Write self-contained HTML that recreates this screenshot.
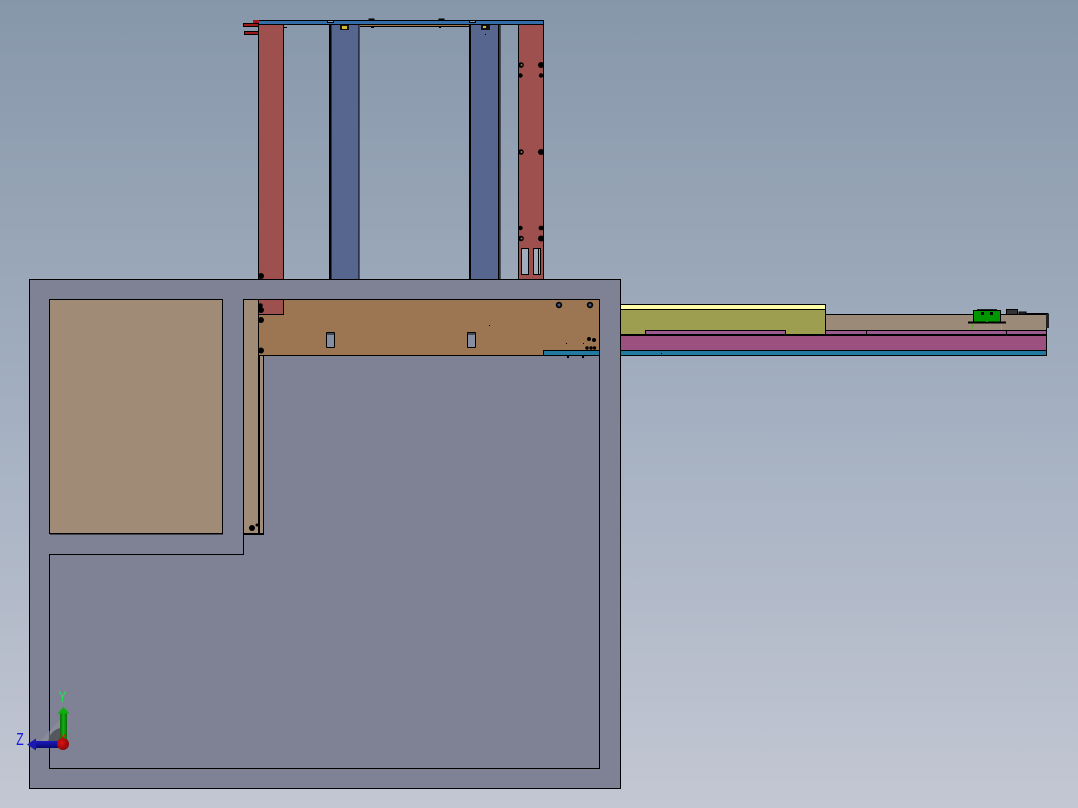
<!DOCTYPE html>
<html>
<head>
<meta charset="utf-8">
<style>
html,body{margin:0;padding:0;width:1078px;height:808px;overflow:hidden;background:#a0adbd}
svg{display:block;position:absolute;left:0;top:0}
</style>
</head>
<body>
<svg width="1078" height="808" viewBox="0 0 1078 808" xmlns="http://www.w3.org/2000/svg">
<defs>
<linearGradient id="bg" x1="0" y1="0" x2="0" y2="1">
<stop offset="0" stop-color="#8797aa"/>
<stop offset="0.5" stop-color="#a3afc0"/>
<stop offset="1" stop-color="#c3c7d3"/>
</linearGradient>
<radialGradient id="ball" cx="0.4" cy="0.4" r="0.7">
<stop offset="0" stop-color="#e01010"/>
<stop offset="1" stop-color="#7a0808"/>
</radialGradient>
<linearGradient id="gshaft" x1="0" y1="0" x2="1" y2="0">
<stop offset="0" stop-color="#0a6a0a"/><stop offset="0.5" stop-color="#12b012"/><stop offset="1" stop-color="#0a6a0a"/>
</linearGradient>
<linearGradient id="bshaft" x1="0" y1="0" x2="0" y2="1">
<stop offset="0" stop-color="#1a1ac0"/><stop offset="1" stop-color="#080870"/>
</linearGradient>
</defs>
<rect width="1078" height="808" fill="url(#bg)"/>

<g shape-rendering="crispEdges" stroke="#000" stroke-width="1">
<!-- columns -->
<rect x="258.5" y="24.5" width="25" height="255" fill="#9e504e"/>
<rect x="330" y="24.5" width="29" height="255" fill="#56668f"/>
<rect x="470.5" y="24.5" width="29.500" height="255" fill="#56668f"/>
<rect x="518.5" y="24.5" width="25" height="255" fill="#9e504e"/>
<path d="M329.5 25V279M331 25V279M469.5 25V279M498.5 25V279" fill="none"/>
<path d="M360 25.5H469" stroke="#9c7552" fill="none"/>
<path d="M360 26.5H469" stroke="#000" fill="none"/>
<!-- slots -->
<rect x="521.5" y="248.5" width="7" height="26" fill="#a0adbd"/>
<rect x="533.5" y="248.5" width="7" height="26" fill="#a0adbd"/>
<path d="M538.5 249V274" fill="none"/>
<!-- top bar -->
<rect x="258.5" y="20.5" width="285" height="4" fill="#336ea8"/>
<rect x="327.5" y="20.5" width="6" height="2" fill="#8e9ab0"/>
<rect x="469.5" y="20.5" width="6" height="2" fill="#8e9ab0"/>
<rect x="369" y="19" width="5" height="1" fill="#000"/>
<rect x="439" y="19" width="5" height="1" fill="#000"/>
<rect x="340" y="25" width="9" height="5" fill="#111" stroke="none"/>
<rect x="342" y="26" width="5" height="3" fill="#d0b830" stroke="none"/>
<rect x="481" y="25" width="9" height="5" fill="#111" stroke="none"/>
<rect x="483" y="26" width="3" height="2" fill="#d0b830" stroke="none"/>
<!-- red pins -->
<rect x="253" y="20" width="6" height="4" fill="#a01818" stroke="none"/>
<rect x="243.5" y="23.5" width="15" height="3" fill="#a01818"/>
<rect x="244.5" y="31.5" width="14" height="3" fill="#a01818"/>

<!-- big panel -->
<rect x="29.5" y="279.5" width="591" height="509" fill="#7f8294"/>
<path d="M49.5 554.5H243.5V299.5H599.5V768.5H49.5Z" fill="#7f8294"/>
<rect x="49.5" y="299.5" width="173" height="234" fill="#a08b77"/>
<path d="M50 534H223" stroke="#000" fill="none"/>
<!-- strip -->
<rect x="243.5" y="299.5" width="20" height="235" fill="#a08b77"/>
<rect x="258" y="300" width="2" height="234" fill="#000" stroke="none"/>
<rect x="244" y="533" width="20" height="2" fill="#000" stroke="none"/>
<!-- brown -->
<rect x="258.5" y="299.5" width="341" height="56" fill="#9c7552"/>
<rect x="258.5" y="299.5" width="25" height="15" fill="#9e504e"/>
<rect x="326.5" y="332.5" width="8" height="15" rx="1" fill="#868fa2"/>
<rect x="467.5" y="332.5" width="8" height="15" rx="1" fill="#868fa2"/>
<path d="M327 334H334M468 334H475" fill="none"/>
<rect x="543.5" y="350.5" width="56" height="5" fill="#237aa0"/>

<!-- right assembly -->
<rect x="825.5" y="314.5" width="221" height="16" fill="#9c8a78"/>
<rect x="620.5" y="304.5" width="205" height="5" fill="#ffffa8"/>
<rect x="620.5" y="309.5" width="205" height="25" fill="#9e9e50"/>
<rect x="645.5" y="330.5" width="140" height="4" fill="#9a5a90"/>
<rect x="825.5" y="330.5" width="221" height="4" fill="#9a5a90"/>
<path d="M866.5 331V334M1006.5 331V334" fill="none"/>
<rect x="620.5" y="335.5" width="426" height="15" fill="#9c5080"/>
<rect x="620.5" y="350.5" width="426" height="5" fill="#237aa0"/>
<path d="M621 334.5H1047" fill="none"/>
<!-- green block -->
<rect x="973.5" y="310.5" width="27" height="12" fill="#009600"/>
<rect x="977" y="309" width="20" height="1" fill="#222" stroke="none"/>
<rect x="968" y="321.5" width="38" height="2" fill="#000" stroke="none"/>
<rect x="972" y="324" width="1" height="6" fill="#6aa040" stroke="none"/>
<rect x="1001" y="324" width="1" height="6" fill="#b0a040" stroke="none"/>
<rect x="986" y="321" width="2" height="1" fill="#00a000" stroke="none"/>
<rect x="981" y="312" width="3" height="3" fill="#000" stroke="none"/>
<rect x="990" y="312" width="3" height="3" fill="#000" stroke="none"/>
<rect x="1006.5" y="309.500" width="11" height="5" fill="#333"/>
<rect x="1019" y="312" width="7" height="2" fill="#333"/>
<path d="M1026 313.500H1048V328" fill="none"/>
<rect x="1046" y="314" width="3" height="14" fill="#222" stroke="none"/>
</g>

<!-- holes -->
<g fill="#000">
<circle cx="521" cy="65" r="2.800"/><circle cx="541" cy="65" r="3"/>
<circle cx="520.500" cy="75.500" r="2.200"/><circle cx="541" cy="75.500" r="2.200"/>
<circle cx="521" cy="152" r="2.800"/><circle cx="541" cy="152" r="3"/>
<circle cx="520.500" cy="228" r="2.200"/><circle cx="541" cy="228" r="2.400"/>
<circle cx="521" cy="238.500" r="2.800"/><circle cx="541" cy="238.500" r="3"/>
<circle cx="261" cy="276" r="3"/>
<circle cx="260.500" cy="305.500" r="2.300"/><circle cx="261" cy="310" r="3"/>
<circle cx="261" cy="320" r="3"/><circle cx="261" cy="350.500" r="3"/>
<circle cx="252" cy="528" r="3"/><circle cx="257" cy="525" r="1.500"/>
<circle cx="559" cy="305" r="3.200"/><circle cx="590" cy="305" r="3.200"/>
<circle cx="589" cy="339" r="2"/><circle cx="594" cy="340" r="2"/>
<circle cx="587" cy="348" r="1.700"/><circle cx="591" cy="348" r="1.700"/><circle cx="594.500" cy="348" r="1.700"/>
<circle cx="568" cy="357" r="1.200"/><circle cx="583" cy="357" r="1.200"/>
<rect x="489" y="325" width="1" height="1"/><rect x="566" y="343" width="1" height="1"/><rect x="583" y="343" width="1" height="1"/><rect x="661" y="353" width="1" height="1"/>
<rect x="284" y="27" width="3" height="1"/><rect x="371" y="26" width="3" height="2"/><rect x="439" y="26" width="2" height="2"/>
<rect x="485" y="34" width="1" height="1"/>
</g>
<g fill="#4a5a80"><circle cx="559" cy="305" r="1.500"/><circle cx="590" cy="305" r="1.500"/></g>
<g fill="#a06a70"><circle cx="521.500" cy="65" r="1"/><circle cx="521.500" cy="152" r="1"/><circle cx="521.500" cy="238.500" r="1"/></g>

<!-- triad -->
<path d="M62 744L37 744L62 718Z" fill="#8f919c" opacity="0.6"/>
<path d="M62 744L48 744A14 16 0 0 1 62 728Z" fill="#55575f"/>
<rect x="60" y="713" width="7" height="28" fill="url(#gshaft)"/>
<path d="M63.500 707L69.500 713.500H57.500Z" fill="#0cb00c"/>
<rect x="35" y="741" width="26" height="7" fill="url(#bshaft)"/>
<path d="M27 744.500L36 738.500V750.500Z" fill="#1a1ab0"/>
<circle cx="63" cy="744" r="6" fill="url(#ball)"/>
<path d="M60.500 734L63 738L65.500 734" fill="none" stroke="#d01010" stroke-width="1"/>
<text transform="translate(62.500 702) scale(.75 1)" font-family="Liberation Sans, sans-serif" font-size="16" fill="#22e050" text-anchor="middle">Y</text>
<text transform="translate(20 745) scale(.68 1)" font-family="Liberation Sans, sans-serif" font-size="18" fill="#1a1ae0" text-anchor="middle">Z</text>
</svg>
</body>
</html>
